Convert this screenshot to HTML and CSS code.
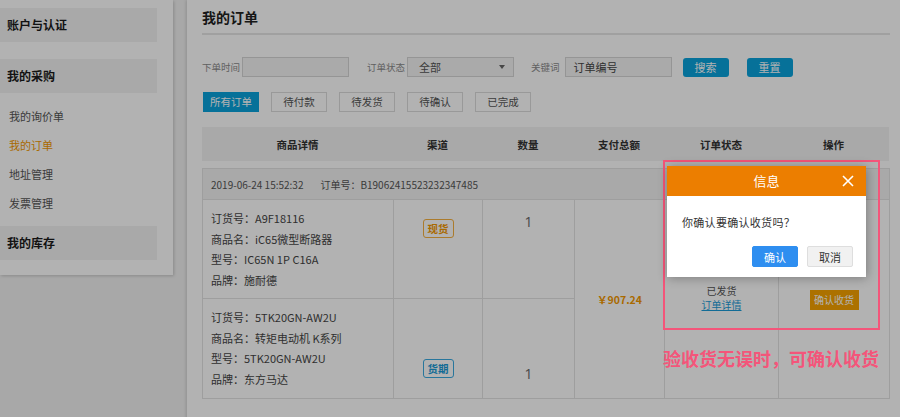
FILE: index.html
```html
<!DOCTYPE html>
<html lang="zh-CN">
<head>
<meta charset="utf-8">
<title>我的订单</title>
<link rel="stylesheet" href="styles.css">
</head>
<body>
<div class="page">
  <aside class="sidebar">
    <div class="side-head">账户与认证</div>
    <div class="side-head">我的采购</div>
    <ul class="side-list">
      <li>我的询价单</li>
      <li class="active">我的订单</li>
      <li>地址管理</li>
      <li>发票管理</li>
    </ul>
    <div class="side-head">我的库存</div>
  </aside>

  <main class="main">
    <h1 class="title">我的订单</h1>

    <div class="filters">
      <span class="f-label">下单时间</span>
      <div class="f-input w-date"></div>
      <span class="f-label ml-status">订单状态</span>
      <div class="f-input f-select">全部<span class="arrow"></span></div>
      <span class="f-label ml-kw">关键词</span>
      <div class="f-input f-text">订单编号</div>
      <button class="btn-blue ml-search">搜索</button>
      <button class="btn-blue ml-reset">重置</button>
    </div>

    <div class="tabs">
      <span class="tab active">所有订单</span>
      <span class="tab">待付款</span>
      <span class="tab">待发货</span>
      <span class="tab">待确认</span>
      <span class="tab">已完成</span>
    </div>

    <table class="grid thead">
      <colgroup>
        <col class="c1"><col class="c2"><col class="c3"><col class="c4"><col class="c5"><col class="c6">
      </colgroup>
      <tr>
        <th>商品详情</th><th>渠道</th><th>数量</th><th>支付总额</th><th>订单状态</th><th>操作</th>
      </tr>
    </table>

    <table class="grid order">
      <colgroup>
        <col class="c1"><col class="c2"><col class="c3"><col class="c4"><col class="c5"><col class="c6">
      </colgroup>
      <tr class="order-head">
        <td colspan="6"><span class="o-date">2019-06-24 15:52:32</span><span class="o-no">订单号：B19062415523232347485</span></td>
      </tr>
      <tr class="r1">
        <td class="prod">
          <p>订货号：A9F18116</p>
          <p>商品名：iC65微型断路器</p>
          <p>型号：IC65N 1P C16A</p>
          <p>品牌：施耐德</p>
        </td>
        <td class="chan top"><span class="badge orange">现货</span></td>
        <td class="qty top">1</td>
        <td class="price" rowspan="2">￥907.24</td>
        <td class="status" rowspan="2"><div class="st-text">已发货</div><div class="st-link"><a class="link">订单详情</a></div></td>
        <td class="action" rowspan="2"><button class="btn-orange">确认收货</button></td>
      </tr>
      <tr class="r2">
        <td class="prod">
          <p>订货号：5TK20GN-AW2U</p>
          <p>商品名：转矩电动机 K系列</p>
          <p>型号：5TK20GN-AW2U</p>
          <p>品牌：东方马达</p>
        </td>
        <td class="chan bottom"><span class="badge blue">货期</span></td>
        <td class="qty bottom">1</td>
      </tr>
    </table>
  </main>
</div>

<div class="mask"></div>

<div class="annot-box"></div>
<div class="annot-text">验收货无误时，可确认收货</div>

<div class="dialog">
  <div class="dlg-head">
    <span class="dlg-title">信息</span>
    <svg class="dlg-close" width="12" height="12" viewBox="0 0 12 12"><path d="M1 1L11 11M11 1L1 11" stroke="#fff" stroke-width="1.6" fill="none"/></svg>
  </div>
  <div class="dlg-body">
    <p class="dlg-msg">你确认要确认收货吗？</p>
    <div class="dlg-btns">
      <button class="dbtn ok">确认</button>
      <button class="dbtn cancel">取消</button>
    </div>
  </div>
</div>
</body>
</html>
```

FILE: styles.css
```css
* { box-sizing: border-box; }
html, body { margin: 0; padding: 0; }
body {
  background: #f1f1f1;
  font-family: "Noto Sans CJK SC", "Microsoft YaHei", sans-serif;
  color: #333;
  width: 900px;
  height: 417px;
  overflow: hidden;
  position: relative;
}
p { margin: 0; }
button { font-family: inherit; cursor: pointer; }

.page {
  display: flex;
  align-items: flex-start;
  gap: 14px;
}

/* sidebar */
.sidebar {
  width: 173px;
  flex: none;
  background: #fff;
  padding: 8px 0 15px;
  box-shadow: 1px 1px 3px rgba(0,0,0,0.18);
}
.side-head {
  width: 157px;
  height: 34px;
  line-height: 34px;
  padding-left: 7px;
  background: #f3f3f3;
  font-size: 12px;
  font-weight: bold;
  color: #1a1a1a;
}
.side-head + .side-head { margin-top: 17px; }
.side-list {
  list-style: none;
  margin: 0 0 8px;
  padding: 9px 0 0 9px;
}
.side-list li {
  height: 29px;
  line-height: 29px;
  font-size: 11px;
  color: #555;
}
.side-list li.active { color: #f39800; }

/* main */
.main {
  flex: 1;
  background: #fff;
  min-height: 420px;
  padding: 0 10px 0 15px;
  box-shadow: -1px 0 3px rgba(0,0,0,0.15);
}
.title {
  margin: 0;
  padding: 7px 0 6px;
  line-height: 20px;
  font-size: 14px;
  font-weight: bold;
  color: #222;
  border-bottom: 2px solid #e6e6e6;
}

.filters {
  display: flex;
  align-items: center;
  margin-top: 22px;
  height: 20px;
}
.f-label {
  font-size: 9.5px;
  color: #8a8a8a;
  margin-right: 2px;
  white-space: nowrap;
}
.f-input {
  height: 20px;
  width: 107px;
  flex: none;
  border: 1px solid #d6d6d6;
  background: #f4f4f4;
  font-size: 11px;
  line-height: 18px;
  color: #555;
}
.ml-status { margin-left: 18px; }
.f-select {
  position: relative;
  padding-left: 11px;
}
.f-select .arrow {
  position: absolute;
  right: 8px;
  top: 7px;
  width: 0;
  height: 0;
  border-left: 3px solid transparent;
  border-right: 3px solid transparent;
  border-top: 4px solid #666;
}
.ml-kw { margin-left: 17px; margin-right: 5px; }
.f-text { padding-left: 8px; color: #444; }
.btn-blue {
  height: 19px;
  width: 46px;
  flex: none;
  border: none;
  border-radius: 3px;
  background: #0aa3dc;
  color: #fff;
  font-size: 11px;
  line-height: 19px;
  padding: 0;
}
.ml-search { margin-left: 11px; }
.ml-reset { margin-left: 18px; }

.tabs {
  display: flex;
  gap: 12px;
  margin-top: 15px;
  padding-left: 1px;
}
.tab {
  width: 56px;
  height: 20px;
  line-height: 18px;
  border: 1px solid #dcdcdc;
  text-align: center;
  font-size: 10.5px;
  color: #555;
  background: #fff;
}
.tab.active {
  background: #0aa3dc;
  border-color: #0aa3dc;
  color: #fff;
}

/* tables */
.grid {
  width: 687px;
  table-layout: fixed;
  border-collapse: collapse;
}
.c1 { width: 191px; }
.c2 { width: 89px; }
.c3 { width: 92px; }
.c4 { width: 90px; }
.c5 { width: 114px; }
.c6 { width: 111px; }

.thead { margin-top: 15px; }
.thead th {
  height: 34px;
  background: #f2f2f2;
  font-size: 10.5px;
  font-weight: bold;
  color: #333;
  padding: 0;
}

.order {
  margin-top: 7px;
  border: 1px solid #e3e3e3;
}
.order td {
  border: 1px solid #e3e3e3;
  padding: 0;
  font-size: 11px;
  color: #444;
}
.order-head td {
  height: 31px;
  background: #f2f2f2;
  padding-left: 8px;
  color: #555;
  font-size: 10px;
}
.o-date { margin-right: 17px; }

.r1 td { height: 99px; }
.r2 td { height: 100px; }

.prod {
  vertical-align: top;
  padding: 8px 0 0 8px !important;
}
.prod p {
  line-height: 20.5px;
  white-space: nowrap;
}
.chan, .qty { text-align: center; }
.top { vertical-align: top; }
.bottom { vertical-align: bottom; }
.r1 .chan { padding-top: 19px; }
.r2 .chan { padding-bottom: 20px; }
.qty {
  font-family: "Open Sans", "Noto Sans CJK SC", sans-serif;
  font-size: 14px !important;
  color: #666 !important;
  line-height: 20px;
}
.r1 .qty { padding-top: 12px; }
.r2 .qty { padding-bottom: 14px; }

.badge {
  display: inline-block;
  width: 31px;
  height: 19px;
  line-height: 17px;
  border: 1px solid;
  border-radius: 3px;
  font-size: 10.5px;
  font-weight: bold;
  text-align: center;
}
.badge.orange { color: #f39800; border-color: #f5b040; }
.badge.blue { color: #1c9ad6; border-color: #3aaae0; }

.price {
  text-align: center;
  vertical-align: middle;
  color: #f39800 !important;
  font-weight: bold;
  font-size: 10.5px !important;
}
.status {
  text-align: center;
  vertical-align: middle;
  font-size: 10px !important;
  color: #555 !important;
  padding-bottom: 2px !important;
}
.st-text, .st-link { line-height: 14.5px; height: 14.5px; }
.link {
  color: #1a9bd7;
  text-decoration: underline;
}
.action { text-align: center; vertical-align: middle; }
.btn-orange {
  width: 49px;
  height: 20px;
  border: none;
  background: #f7a300;
  color: #fff;
  font-size: 10px;
  padding: 0;
  margin-top: 1px;
}

/* overlay */
.mask {
  position: absolute;
  inset: 0;
  background: rgba(0,0,0,0.3);
}

.annot-box {
  position: absolute;
  left: 663px;
  top: 160px;
  width: 217px;
  height: 170px;
  border: 2px solid #f4557a;
}
.annot-text {
  position: absolute;
  left: 663px;
  top: 345px;
  font-size: 18px;
  line-height: 26px;
  color: #f4557a;
  font-weight: bold;
  white-space: nowrap;
}

.dialog {
  position: absolute;
  left: 667px;
  top: 166px;
  width: 199px;
  background: #fff;
  box-shadow: 1px 1px 10px rgba(0,0,0,0.3);
}
.dlg-head {
  position: relative;
  height: 30px;
  background: #ec7e00;
  text-align: center;
}
.dlg-title {
  color: #fff;
  font-size: 13px;
  line-height: 30px;
}
.dlg-close {
  position: absolute;
  right: 12px;
  top: 9px;
}
.dlg-body {
  height: 81px;
  padding: 17px 13px 0 15px;
}
.dlg-msg {
  font-size: 11px;
  line-height: 18px;
  color: #333;
  letter-spacing: 0.3px;
}
.dlg-btns {
  display: flex;
  justify-content: flex-end;
  gap: 9px;
  margin-top: 15px;
}
.dbtn {
  width: 46px;
  height: 21px;
  padding: 0;
  font-size: 11px;
  border-radius: 2px;
}
.dbtn.ok {
  background: #2e8ef0;
  border: 1px solid #2e8ef0;
  color: #fff;
}
.dbtn.cancel {
  background: #f1f1f1;
  border: 1px solid #dedede;
  color: #333;
}
```
